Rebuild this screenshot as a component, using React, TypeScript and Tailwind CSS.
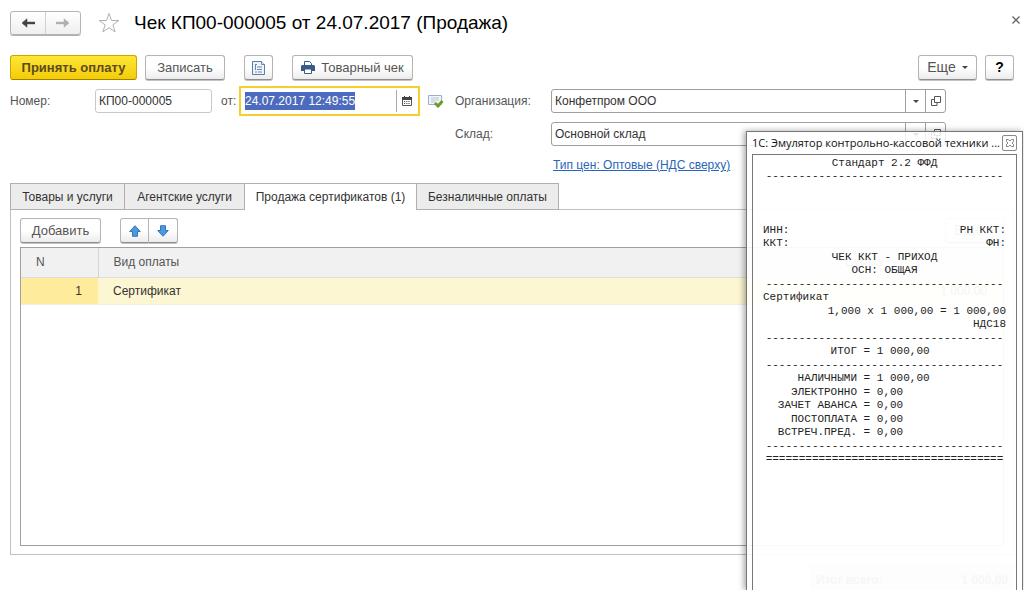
import { useEffect, useRef } from "react";

const btn =
  "flex items-center justify-center rounded-[3px] border border-[#b4b4b4] border-b-[#8e8e8e] bg-linear-to-b from-white from-50% to-[#ececec] text-[13px] text-[#555] shadow-[0_1px_0_#c4c4c4]";

const tabs = [
  { title: "Товары и услуги", width: "w-[115px]" },
  { title: "Агентские услуги", width: "w-[120px]" },
  { title: "Продажа сертификатов (1)", width: "w-[172px]", active: true },
  { title: "Безналичные оплаты", width: "w-[142px]" },
];

function Arrow({ className }: { className: string }) {
  return (
    <svg viewBox="0 0 14 10" className={className} fill="none" stroke="currentColor" strokeWidth="2.4">
      <path d="M2 5h12" />
      <path d="M6 .8 1 5l5 4.200z" fill="currentColor" strokeWidth="0.500" />
    </svg>
  );
}

function BlockArrow({ className }: { className: string }) {
  return (
    <svg viewBox="0 0 12 12" className={className}>
      <path d="M6 .7 11.300 6.500H8.500v4.800h-5V6.500H.7z" fill="#4a9ae0" stroke="#2f6cb4" strokeWidth="0.900" />
    </svg>
  );
}

function Caret() {
  return (
    <svg viewBox="0 0 6 3" className="h-[3px] w-[6px]">
      <path d="M0 0h6L3 3z" fill="#444" />
    </svg>
  );
}

function Combo({ id, label, value }: any) {
  return (
    <div className="flex items-center">
      <label htmlFor={id} className="w-24 shrink-0 text-[#555]">{label}</label>
      <div className="flex h-6 flex-1 rounded-[3px] border border-[#a0a0a0] bg-white">
        <input id={id} defaultValue={value} className="min-w-0 flex-1 px-[3px] outline-none" />
        <button aria-label="Выбрать" className="flex w-5 items-center justify-center border-l border-[#a0a0a0]">
          <Caret />
        </button>
        <button aria-label="Открыть" className="flex w-5 items-center justify-center border-l border-[#a0a0a0]">
          <svg viewBox="0 0 10 10" className="size-[10px]" fill="none" stroke="#555">
            <path d="M3.500.5h6v6h-6zM3.500 3.500h-3v6h5.500v-3" />
          </svg>
        </button>
      </div>
    </div>
  );
}

function Dashes({ char = "-" }: { char?: string }) {
  return <p className="text-center">{char.repeat(36)}</p>;
}

function Sum({ name, value }: { name: string; value: string }) {
  return (
    <div className="flex">
      <span className="w-[94px] text-right">{name}</span>
      <span>{" = " + value}</span>
    </div>
  );
}

function Receipt() {
  return (
    <div className="flex flex-col gap-px px-[10px] pt-[2px] font-['Liberation_Mono',monospace] text-[11px] leading-[13px] whitespace-pre text-[#222]">
      <div>
        <p className="text-center">Стандарт 2.2 ФФД</p>
        <Dashes />
      </div>
      <div className="pt-10">
        <p className="flex justify-between"><span>ИНН:</span><span>РН ККТ:</span></p>
        <p className="flex justify-between"><span>ККТ:</span><span>ФН:</span></p>
      </div>
      <div className="text-center">
        <p>ЧЕК ККТ - ПРИХОД</p>
        <p>ОСН: ОБЩАЯ</p>
      </div>
      <div>
        <Dashes />
        <p>Сертификат</p>
      </div>
      <div className="text-right">
        <p>1,000 x 1 000,00 = 1 000,00</p>
        <p>НДС18</p>
      </div>
      <div>
        <Dashes />
        <Sum name="ИТОГ" value="1 000,00" />
      </div>
      <div>
        <Dashes />
        <Sum name="НАЛИЧНЫМИ" value="1 000,00" />
      </div>
      <div>
        <Sum name="ЭЛЕКТРОННО" value="0,00" />
        <Sum name="ЗАЧЕТ АВАНСА" value="0,00" />
      </div>
      <div>
        <Sum name="ПОСТОПЛАТА" value="0,00" />
        <Sum name="ВСТРЕЧ.ПРЕД." value="0,00" />
      </div>
      <div>
        <Dashes />
        <Dashes char="=" />
      </div>
    </div>
  );
}

function EmulatorWindow() {
  return (
    <section className="absolute top-[131px] right-px bottom-0 flex w-[277px] flex-col border border-b-0 border-[#777] bg-white/85 px-[5px] shadow-[-2px_0_6px_rgba(0,0,0,0.35)]">
      <header className="flex h-[22px] shrink-0 items-center justify-between">
        <h2 className="font-['Open_Sans',sans-serif] text-[11px] whitespace-nowrap text-[#111]">
          1С: Эмулятор контрольно-кассовой техники ...
        </h2>
        <button aria-label="Закрыть окно" className="flex h-4 w-[15px] shrink-0 items-center justify-center rounded-[2px] border border-[#888]">
          <svg viewBox="0 0 8 8" className="size-2" fill="none" stroke="#666" strokeWidth="0.800">
            <path d="M.5.5h2L4 2 5.500.5h2v2L6 4l1.500 1.500v2h-2L4 6 2.500 7.500h-2v-2L2 4 .5 2.500z" />
          </svg>
        </button>
      </header>
      <div className="flex-1 border border-b-0 border-[#777] bg-white/60">
        <Receipt />
      </div>
    </section>
  );
}

export default function App() {
  const dateRef = useRef<HTMLInputElement>(null);

  useEffect(() => {
    dateRef.current?.focus();
    dateRef.current?.select();
  }, []);

  return (
    <div className="relative flex h-screen flex-col overflow-hidden bg-white font-['Liberation_Sans',Arial,sans-serif] text-[12px] text-[#333]">
      <header className="flex items-center pt-[10px] pr-[3px] pl-[10px]">
        <div className="flex h-6 w-[71px] rounded-[3px] border border-[#b4b4b4] bg-linear-to-b from-white to-[#efefef] shadow-[0_1px_0_#b0b0b0]">
          <button aria-label="Назад" className="flex flex-1 items-center justify-center text-[#444]">
            <Arrow className="h-[10px] w-[14px]" />
          </button>
          <button aria-label="Вперед" className="flex flex-1 items-center justify-center border-l border-[#d0d0d0] text-[#b0b0b0]">
            <Arrow className="h-[10px] w-[14px] rotate-180" />
          </button>
        </div>
        <button aria-label="В избранное" className="ml-[17px]">
          <svg viewBox="0 0 22 22" className="size-[22px]" fill="none" stroke="#b0b0b0">
            <path d="m11 1.500 2.500 7h7.300l-5.900 4.400 2.200 7.100-6.100-4.300L4.900 20l2.200-7.100L1.200 8.500h7.300z" />
          </svg>
        </button>
        <h1 className="ml-[14px] flex-1 pt-px text-[19px] leading-6 text-black">Чек КП00-000005 от 24.07.2017 (Продажа)</h1>
        <button aria-label="Закрыть" className="mb-[6px] p-px">
          <svg viewBox="0 0 8 8" className="size-2" stroke="#666" strokeWidth="1.300"><path d="m.5.5 7 7m0-7-7 7" /></svg>
        </button>
      </header>

      <div className="mt-5 flex h-[25px] shrink-0 px-[10px]">
        <button className="w-[127px] rounded-[3px] border border-[#cfa500] border-b-[#a08000] bg-linear-to-b from-[#ffe633] to-[#f3cc00] text-[13px] font-bold text-[#5c4a1c]">
          Принять оплату
        </button>
        <button className={`${btn} ml-2 w-20`}>Записать</button>
        <button aria-label="Структура документа" className={`${btn} ml-[19px] w-[29px]`}>
          <svg viewBox="0 0 13 14" className="h-[14px] w-[13px]" fill="#eef4fa" stroke="#5b7da3">
            <path d="M.5.500h9l3 3v10H.5z" />
            <path d="M9.500.5v3h3M3 3.500h2M5 6h2M7 6h3M5 8.500h5M3 11h2M6 11h4M3.500 4v5" strokeWidth="0.900" />
          </svg>
        </button>
        <button className={`${btn} ml-[19px] w-[121px] gap-[6px]`}>
          <svg viewBox="0 0 14 13" className="h-[13px] w-[14px]">
            <path d="M3.500 4V.5h5l2 2V4" fill="#fff" stroke="#3c5a87" />
            <path d="M1 4h12l1 1v5h-3V8H3v2H0V5z" fill="#3c5a87" />
            <path d="M3.500 8h7v4.500h-7z" fill="#fff" stroke="#3c5a87" />
          </svg>
          Товарный чек
        </button>
        <button className={`${btn} ml-auto w-[59px]`}>
          <span className="mr-[6px] text-[14px]">Еще</span>
          <Caret />
        </button>
        <button className={`${btn} ml-2 w-[29px]`}>
          <span className="text-[14px] font-bold text-black">?</span>
        </button>
      </div>

      <div className="mt-[6px] flex items-start pl-[10px]">
        <div className="flex w-[445px] shrink-0 items-center">
          <label htmlFor="number" className="w-[85px] text-[#555]">Номер:</label>
          <input id="number" defaultValue="КП00-000005" className="h-6 w-[117px] rounded-[3px] border border-[#c8c8c8] px-[3px]" />
          <label htmlFor="date" className="ml-[9px] w-[18px] text-[#555]">от:</label>
          <div className="flex h-[30px] w-[181px] items-center border-2 border-[#f5cf2e] bg-white">
            <input
              id="date"
              ref={dateRef}
              defaultValue="24.07.2017 12:49:55"
              className="min-w-0 flex-1 px-1 outline-none selection:bg-[#4b69bd]/99 selection:text-white"
            />
            <button aria-label="Календарь" className="flex h-[22px] w-[22px] items-center justify-center border-l border-[#aaa] pr-[2px]">
              <svg viewBox="0 0 10 10" className="size-[10px]">
                <path d="M.5 1.500h9v8h-9z" fill="#fff" stroke="#555" />
                <path d="M0 1h10v3H0zM2 0h1v2H2zM7 0h1v2H7z" fill="#444" />
                <path d="M2 5.500h6M2 7.500h6" stroke="#555" strokeDasharray="1.200 1" />
              </svg>
            </button>
          </div>
          <svg viewBox="0 0 16 14" className="ml-2 h-[14px] w-4">
            <path d="M.5 1.500h13v9H.5z" fill="#f2f6fa" stroke="#9ab0c6" />
            <path d="M3 4h8M3 6h8M3 8h4" stroke="#b5c5d5" />
            <path d="m7 9 3 3 4.500-5" fill="none" stroke="#6f9a2e" strokeWidth="3" />
          </svg>
        </div>
        <div className="mr-[78px] flex flex-1 flex-col gap-[9px] pt-[3px]">
          <Combo id="org" label="Организация:" value="Конфетпром ООО" />
          <Combo id="store" label="Склад:" value="Основной склад" />
          <a href="#prices" className="ml-[98px] self-start leading-5 text-[#2a66b8] underline">
            Тип цен: Оптовые (НДС сверху)
          </a>
        </div>
      </div>

      <nav className="mx-[10px] mt-2 flex h-[27px] shrink-0">
        {tabs.map((tab) => (
          <button
            key={tab.title}
            className={`border-t border-r border-[#b0b0b0] whitespace-nowrap first:border-l ${tab.width} ${tab.active ? "bg-white" : "border-b bg-[#ebeceb]"}`}
          >
            {tab.title}
          </button>
        ))}
        <div className="flex-1 border-b border-[#c0c0c0]" />
      </nav>

      <main className="mx-[10px] flex h-[345px] shrink-0 flex-col border border-t-0 border-[#c0c0c0] px-[9px] py-2">
        <div className="flex h-[25px]">
          <button className={`${btn} w-[81px]`}>Добавить</button>
          <button aria-label="Вверх" className={`${btn} ml-[19px] w-[29px] rounded-r-none`}>
            <BlockArrow className="size-3" />
          </button>
          <button aria-label="Вниз" className={`${btn} w-[29px] rounded-l-none border-l-0`}>
            <BlockArrow className="size-3 rotate-180" />
          </button>
          <button className={`${btn} ml-auto w-[59px]`}>
            <span className="mr-[6px] text-[14px]">Еще</span>
            <Caret />
          </button>
        </div>
        <div className="mt-1 flex-1 border border-[#a0a0a0]">
          <table className="w-full text-left">
            <thead>
              <tr className="h-[29px] border-b border-[#ddd] bg-[#f1f1f1] text-[#555]">
                <th className="w-[77px] border-r border-[#d5d5d5] pl-[15px] font-normal">N</th>
                <th className="pl-[15px] font-normal">Вид оплаты</th>
                <th className="w-[166px] pl-2 font-normal">Сумма</th>
              </tr>
            </thead>
            <tbody>
              <tr className="h-[27px] border-b border-[#f3ece0] bg-[#fdf6d2]">
                <td className="bg-[#ffeb9c] pr-4 text-right">1</td>
                <td className="pl-[15px]">Сертификат</td>
                <td className="pr-4 text-right">1 000,00</td>
              </tr>
            </tbody>
          </table>
        </div>
      </main>

      <footer className="mt-[9px] mr-[10px] flex h-8 w-[204px] shrink-0 items-center justify-between self-end bg-[#e0dada] px-[6px] text-[12px] font-bold text-[#666]">
        <span>Итог всего:</span>
        <span>1 000,00</span>
      </footer>

      <EmulatorWindow />
    </div>
  );
}
